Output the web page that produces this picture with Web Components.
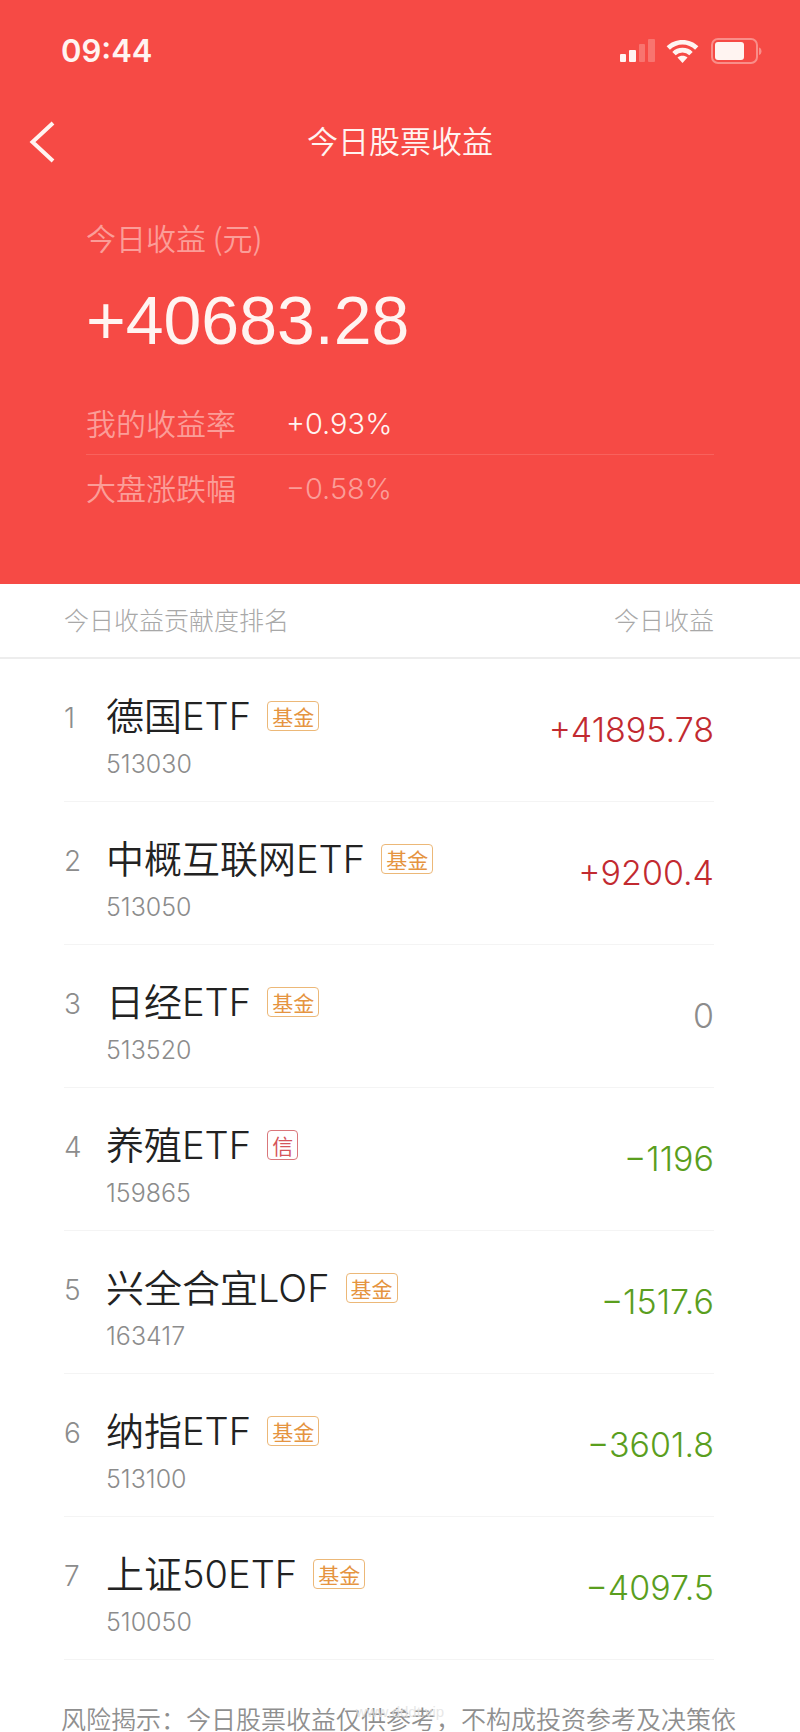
<!DOCTYPE html>
<html lang="zh-CN">
<head>
<meta charset="utf-8">
<meta name="viewport" content="width=device-width, initial-scale=1">
<title>今日股票收益</title>
<style>
  body {
    margin: 0;
    background: #fff;
    font-family: Inter, "Noto Sans CJK SC", sans-serif;
    --cjk: "Noto Sans CJK SC", sans-serif;
    --mixed: Inter, "Noto Sans CJK SC", sans-serif;
    --latin: "Liberation Sans", "Noto Sans CJK SC", sans-serif;
    --red: #f64a45;
  }
</style>
</head>
<body>
<profit-page>
  <status-bar slot="top" time="09:44"></status-bar>
  <nav-bar slot="top">今日股票收益</nav-bar>
  <profit-summary slot="top" label="今日收益 (元)" total="+40683.28">
    <rate-row label="我的收益率" value="+0.93%" strong></rate-row>
    <rate-row label="大盘涨跌幅" value="−0.58%"></rate-row>
  </profit-summary>
  <rank-list left="今日收益贡献度排名" right="今日收益"></rank-list>
  <risk-note mark="www.dddt.vip">风险揭示：今日股票收益仅供参考，不构成投资参考及决策依</risk-note>
</profit-page>

<script>
class BaseElement extends HTMLElement {
  constructor() {
    super();
    this.attachShadow({ mode: 'open' });
  }

  connectedCallback() {
    this.shadowRoot.innerHTML = this.render();
  }

  attr(name) {
    return this.getAttribute(name) || '';
  }
}

class ProfitPage extends BaseElement {
  render() {
    return `
      <style>
        :host { display: block; }
        header { background: var(--red); padding-bottom: 64px; }
      </style>
      <header><slot name="top"></slot></header>
      <main><slot></slot></main>
    `;
  }
}

class StatusBar extends BaseElement {
  render() {
    return `
      <style>
        :host {
          display: flex;
          justify-content: space-between;
          align-items: center;
          padding: 32px 38px 0 61px;
          color: #fff4f1;
        }
        time { font: 600 31px/38px Inter, sans-serif; }
        .icons { display: flex; align-items: center; gap: 11px; }
        svg { display: block; fill: #fff4f1; }
      </style>
      <time>${this.attr('time')}</time>
      <div class="icons">
        <svg width="36" height="24" viewBox="0 0 36 24">
          <rect x="1" y="15" width="6" height="8" rx="1"/>
          <rect x="10" y="11" width="7" height="12" rx="1"/>
          <rect x="20" y="5" width="6" height="18" rx="1" opacity=".25"/>
          <rect x="29" y="0" width="7" height="23" rx="1" opacity=".25"/>
        </svg>
        <svg width="33" height="25" viewBox="0 0 34 26">
          <path d="M17 1C10.500 1 4.600 3.500.5 7.600L3.900 11.200A18.700 18.700 0 0 1 30.100 11.200L33.500 7.600C29.400 3.500 23.500 1 17 1Z"/>
          <path d="M17 9.200C12.800 9.200 9.100 10.800 6.400 13.400L9.900 17A10.200 10.200 0 0 1 24.100 17L27.600 13.400C24.900 10.800 21.200 9.200 17 9.200Z"/>
          <path d="M17 17.400C15 17.400 13.200 18.100 11.800 19.300L17 25L22.200 19.300C20.800 18.100 19 17.400 17 17.400Z"/>
        </svg>
        <svg width="52" height="26" viewBox="0 0 52 26">
          <rect x="2" y="1" width="45" height="24" rx="6" fill="none" stroke="#fff4f1" stroke-width="2" opacity=".4"/>
          <rect x="5" y="4" width="29" height="18" rx="3"/>
          <path d="M49 9.500C52.300 10 52.300 16.500 49 17Z" opacity=".4"/>
        </svg>
      </div>
    `;
  }
}

class NavBar extends BaseElement {
  render() {
    return `
      <style>
        :host {
          display: grid;
          grid-template-columns: 56px 1fr 56px;
          align-items: center;
          padding: 48px 0 0;
          color: #fff4f1;
        }
        button {
          padding: 0 0 0 28px;
          border: 0;
          background: none;
          color: inherit;
        }
        svg { display: block; }
        h1 {
          margin: 0;
          padding-bottom: 4px;
          text-align: center;
          font: 350 31px/44px var(--cjk);
        }
      </style>
      <button type="button" aria-label="返回">
        <svg width="28" height="44" viewBox="0 0 28 44" fill="none" stroke="currentColor" stroke-width="4">
          <path d="M25 3L4.500 22L25 41"/>
        </svg>
      </button>
      <h1><slot></slot></h1>
    `;
  }
}

class ProfitSummary extends BaseElement {
  render() {
    return `
      <style>
        :host {
          display: block;
          padding: 49px 86px 0;
          color: #fff4f1;
        }
        .label { font: 350 30px/44px var(--cjk); color: #fb9d98; }
        .total { font: 68px/80px var(--latin); padding-top: 21px; }
        .rates { padding-top: 30px; }
      </style>
      <div class="label">${this.attr('label')}</div>
      <div class="total">${this.attr('total')}</div>
      <div class="rates"><slot></slot></div>
    `;
  }
}

class RateRow extends BaseElement {
  render() {
    return `
      <style>
        :host {
          display: flex;
          height: 64px;
          align-items: center;
          gap: 50px;
          border-bottom: 1px solid transparent;
          color: #fb9d98;
          font: 350 30px/44px var(--cjk);
        }
        :host([strong]) { border-color: #f8625d; }
        .value { padding-top: 4px; font: 300 29px/44px var(--mixed); }
        :host([strong]) .value { color: #fff4f1; }
      </style>
      <span>${this.attr('label')}</span>
      <span class="value">${this.attr('value')}</span>
    `;
  }
}

class FundTag extends BaseElement {
  render() {
    return `
      <style>
        :host {
          display: block;
          padding: 0 4px;
          border: 1px solid #ecb878;
          border-radius: 4px;
          color: #e59440;
          font: 400 21px/28px var(--cjk);
        }
        :host([kind="credit"]) { border-color: #d9777b; color: #d5555b; }
      </style>
      <slot></slot>
    `;
  }
}

const funds = [
  { name: '德国ETF', code: '513030', tag: '基金', profit: '+41895.78' },
  { name: '中概互联网ETF', code: '513050', tag: '基金', profit: '+9200.4' },
  { name: '日经ETF', code: '513520', tag: '基金', profit: '0' },
  { name: '养殖ETF', code: '159865', tag: '信', profit: '−1196' },
  { name: '兴全合宜LOF', code: '163417', tag: '基金', profit: '−1517.6' },
  { name: '纳指ETF', code: '513100', tag: '基金', profit: '−3601.8' },
  { name: '上证50ETF', code: '510050', tag: '基金', profit: '−4097.5' }
];

function trend(profit) {
  if (profit[0] === '+') return 'up';
  if (profit[0] === '−') return 'down';
  return 'flat';
}

class RankList extends BaseElement {
  render() {
    let rows = '';
    funds.forEach((fund, i) => {
      const kind = fund.tag === '信' ? 'credit' : 'fund';
      rows += `
        <li>
          <span class="rank">${i + 1}</span>
          <div class="info">
            <div class="title">
              <span class="name">${fund.name}</span>
              <fund-tag kind="${kind}">${fund.tag}</fund-tag>
            </div>
            <div class="code">${fund.code}</div>
          </div>
          <span class="profit ${trend(fund.profit)}">${fund.profit}</span>
        </li>`;
    });

    return `
      <style>
        :host { display: block; }
        .head {
          display: flex;
          justify-content: space-between;
          padding: 17px 86px 19px 64px;
          border-bottom: 2px solid #ededed;
          font: 300 25px/37px var(--cjk);
          color: #a8a8a8;
        }
        ol { list-style: none; margin: 0; padding: 0 86px 0 64px; }
        li {
          display: flex;
          box-sizing: border-box;
          height: 143px;
          border-bottom: 1px solid #f4f4f4;
        }
        .rank {
          width: 42px;
          padding-top: 40px;
          font: 300 28px/38px Inter, sans-serif;
          color: #8c8c8c;
        }
        .info { flex: 1; padding-top: 31px; }
        .title { display: flex; align-items: center; gap: 16px; }
        .name { font: 350 38px/52px var(--mixed); color: #222; }
        .code { padding-top: 3px; font: 300 25px/38px Inter, sans-serif; color: #8c8c8c; }
        .profit { padding-top: 48px; font: 300 34px/46px Inter, sans-serif; }
        .up { color: #c22a30; }
        .down { color: #5a9e1e; }
        .flat { color: #8c8c8c; }
      </style>
      <div class="head"><span>${this.attr('left')}</span><span>${this.attr('right')}</span></div>
      <ol>${rows}</ol>
    `;
  }
}

class RiskNote extends BaseElement {
  render() {
    return `
      <style>
        :host { display: block; position: relative; padding: 45px 0 0 61px; }
        p {
          margin: 0;
          font: 350 25px/26px var(--cjk);
          color: #8f8f8f;
          white-space: nowrap;
        }
        .mark {
          position: absolute;
          left: 0;
          right: 0;
          top: 42px;
          text-align: center;
          font: 15px/20px var(--latin);
          color: rgba(225, 225, 225, .8);
        }
      </style>
      <p><slot></slot></p>
      <span class="mark">${this.attr('mark')}</span>
    `;
  }
}

customElements.define('profit-page', ProfitPage);
customElements.define('status-bar', StatusBar);
customElements.define('nav-bar', NavBar);
customElements.define('profit-summary', ProfitSummary);
customElements.define('rate-row', RateRow);
customElements.define('fund-tag', FundTag);
customElements.define('rank-list', RankList);
customElements.define('risk-note', RiskNote);
</script>
</body>
</html>
